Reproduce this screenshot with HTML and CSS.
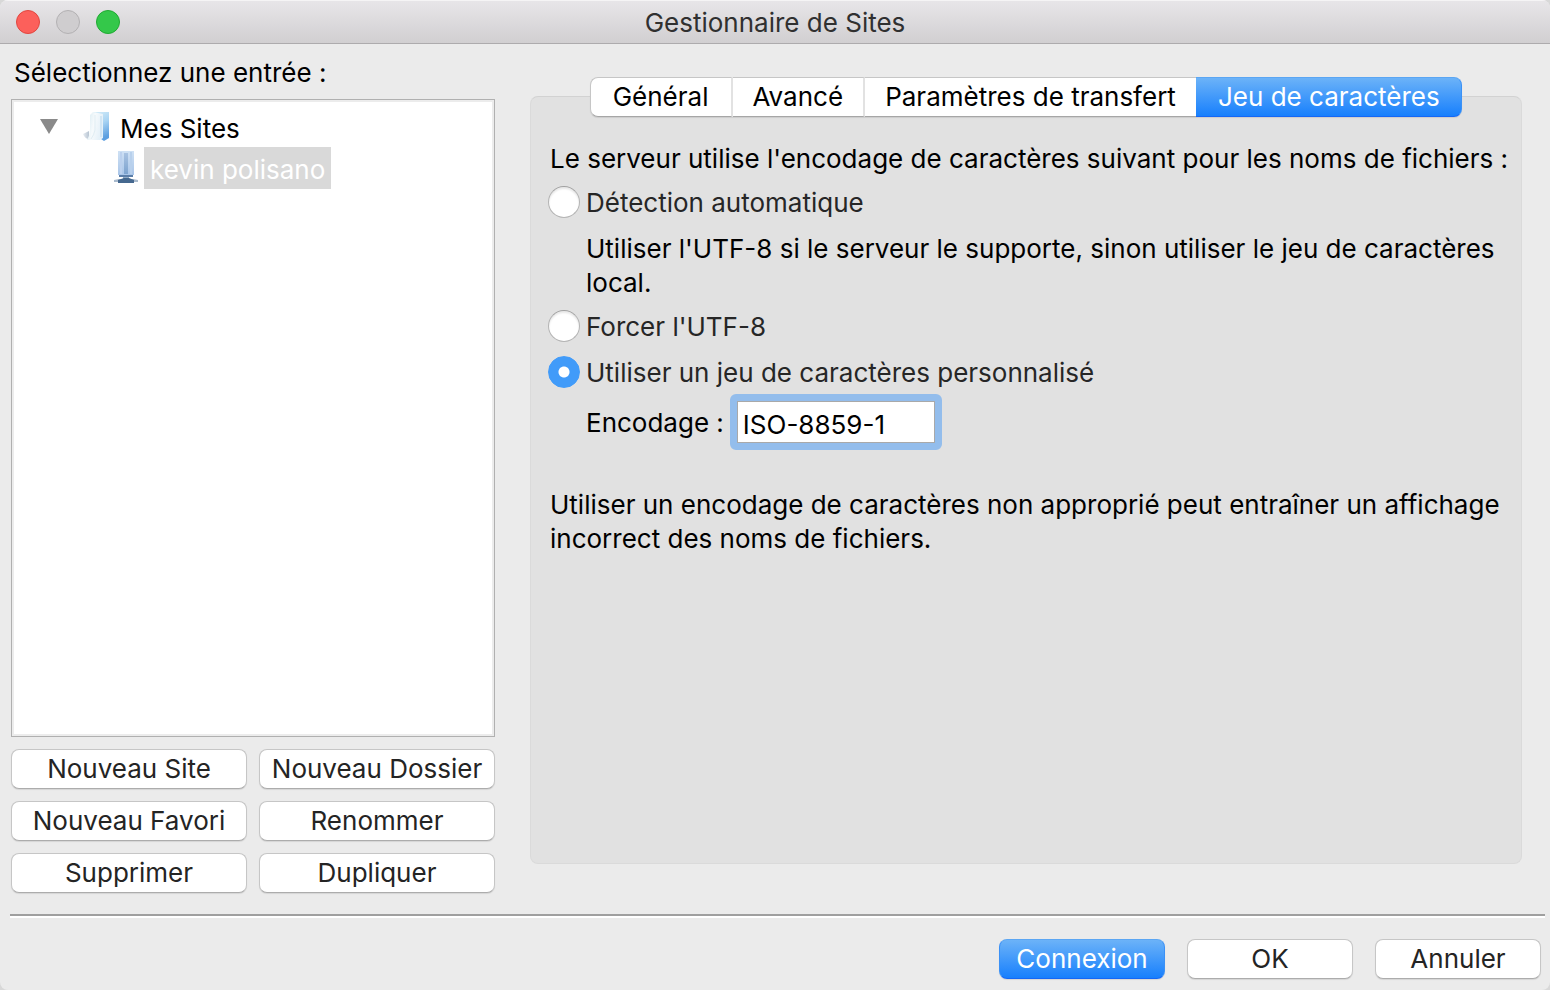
FILE: index.html
```html
<!DOCTYPE html>
<html lang="fr">
<head>
<meta charset="utf-8">
<title>Gestionnaire de Sites</title>
<link rel="stylesheet" href="styles.css">
</head>
<body>
<div class="window">
  <header class="titlebar">
    <div class="lights">
      <button class="light close" type="button" aria-label="Fermer"></button>
      <button class="light minimize" type="button" aria-label="Réduire" disabled></button>
      <button class="light expand" type="button" aria-label="Agrandir"></button>
    </div>
    <h1 class="title">Gestionnaire de Sites</h1>
  </header>

  <main class="content">
    <section class="sites">
      <h2 class="sites-label" id="sites-label">Sélectionnez une entrée :</h2>
      <ul class="tree" role="tree" aria-labelledby="sites-label">
        <li role="treeitem" aria-expanded="true" aria-selected="false">
          <div class="node">
            <svg class="arrow" width="18" height="15" viewBox="0 0 18 15"><path d="M0 0H18L9 15Z" fill="#8a8a8a"/></svg>
            <svg class="folder" width="32" height="32" viewBox="0 0 32 32">
              <defs>
                <linearGradient id="back" x1="0" y1="0" x2="0.3" y2="1"><stop offset="0" stop-color="#d6edf8"/><stop offset="0.5" stop-color="#a9d4f3"/><stop offset="1" stop-color="#5c9fe0"/></linearGradient>
                <linearGradient id="front" x1="0" y1="0" x2="1" y2="0.3"><stop offset="0" stop-color="#d5e9f1"/><stop offset="0.5" stop-color="#f6fafc"/><stop offset="1" stop-color="#e4f0f8"/></linearGradient>
                <linearGradient id="shade" x1="0" y1="0" x2="1" y2="0"><stop offset="0" stop-color="#e8edf2"/><stop offset="1" stop-color="#b7c4d2"/></linearGradient>
              </defs>
              <path d="M2 24L8 21V29Q4 29 2 24Z" fill="url(#shade)"/>
              <path d="M12 2H28V28L23 31L20 29Z" fill="url(#back)"/>
              <path d="M9 5L12 2L22 4V28L19 30H6Q9 25 9 18Z" fill="url(#front)"/>
              <path d="M14 5V20Q13 25 10 29" fill="none" stroke="#e0edf3"/>
              <path d="M20 6V27" stroke="#d2e6f4" stroke-width="2"/>
            </svg>
            <span class="name">Mes Sites</span>
          </div>
          <ul class="branch" role="group">
            <li class="node" role="treeitem" aria-selected="true">
              <svg class="server" width="28" height="36" viewBox="0 0 28 36">
                <defs>
                  <linearGradient id="case" x1="0" y1="0" x2="0" y2="1"><stop offset="0" stop-color="#cfe1f4"/><stop offset="1" stop-color="#a9c5e8"/></linearGradient>
                  <linearGradient id="slot" x1="0" y1="0" x2="0" y2="1"><stop offset="0" stop-color="#a9c3e2"/><stop offset="1" stop-color="#7da3cf"/></linearGradient>
                </defs>
                <path d="M6 2H22V26H6Z" fill="url(#case)"/>
                <path d="M8 3H10V25H8Z" fill="#bcd1ee"/>
                <path d="M12 4H16V25H12Z" fill="url(#slot)"/>
                <path d="M18 3H20V25H18Z" fill="#b8d0ec"/>
                <path d="M7 26H21V28H7Z" fill="#5b7ea9"/>
                <path d="M11 28H17V30H11Z" fill="#8fa9c5"/>
                <path d="M2 31L7 30H21L26 31V33H2Z" fill="#a9bacd"/>
                <path d="M6 31L12 29H17L22 31V34H6Z" fill="#45688f"/>
              </svg>
              <span class="name selected">kevin polisano</span>
            </li>
          </ul>
        </li>
      </ul>
      <div class="actions">
        <button class="button" type="button">Nouveau Site</button>
        <button class="button" type="button">Nouveau Dossier</button>
        <button class="button" type="button">Nouveau Favori</button>
        <button class="button" type="button">Renommer</button>
        <button class="button" type="button">Supprimer</button>
        <button class="button" type="button">Dupliquer</button>
      </div>
    </section>

    <section class="settings">
      <div class="tabs" role="tablist">
        <button class="tab" type="button" role="tab" aria-selected="false">Général</button>
        <button class="tab" type="button" role="tab" aria-selected="false">Avancé</button>
        <button class="tab" type="button" role="tab" aria-selected="false">Paramètres de transfert</button>
        <button class="tab active" type="button" role="tab" aria-selected="true">Jeu de caractères</button>
      </div>
      <form class="panel" role="tabpanel">
        <p class="intro">Le serveur utilise l'encodage de caractères suivant pour les noms de fichiers :</p>
        <div class="option">
          <input class="radio" type="radio" name="charset" id="auto">
          <label for="auto">Détection automatique</label>
        </div>
        <p class="hint">Utiliser l'UTF-8 si le serveur le supporte, sinon utiliser le jeu de caractères local.</p>
        <div class="option">
          <input class="radio" type="radio" name="charset" id="utf8">
          <label for="utf8">Forcer l'UTF-8</label>
        </div>
        <div class="option custom">
          <input class="radio" type="radio" name="charset" id="custom" checked>
          <label for="custom">Utiliser un jeu de caractères personnalisé</label>
        </div>
        <div class="encoding">
          <label for="encoding">Encodage :</label>
          <input class="field" type="text" id="encoding" value="ISO-8859-1">
        </div>
        <p class="warning">Utiliser un encodage de caractères non approprié peut entraîner un affichage incorrect des noms de fichiers.</p>
      </form>
    </section>
  </main>

  <footer class="footer">
    <button class="button primary" type="button">Connexion</button>
    <button class="button" type="button">OK</button>
    <button class="button" type="button">Annuler</button>
  </footer>
</div>
</body>
</html>
```

FILE: styles.css
```css
* {
  box-sizing: border-box;
}

body {
  margin: 0;
  background: #d8d8d8;
  color: #000;
  font: 26px/34px Inter, "Liberation Sans", sans-serif;
}

h1, h2, p, ul {
  margin: 0;
  padding: 0;
  font: inherit;
  list-style: none;
}

button, input {
  font: inherit;
}

.window {
  display: flex;
  flex-direction: column;
  min-height: 100vh;
  background: #ebebeb;
  border-radius: 8px;
  overflow: hidden;
}

.titlebar {
  display: grid;
  grid-template-columns: 1fr auto 1fr;
  align-items: center;
  height: 44px;
  padding: 0 16px;
  background: linear-gradient(#e8e6e9, #d1cfd1);
  border-bottom: 1px solid #adabad;
  box-shadow: inset 0 1px #f5f4f5;
}

.lights {
  display: flex;
  gap: 16px;
}

.light {
  width: 24px;
  height: 24px;
  padding: 0;
  border: 1px solid;
  border-radius: 50%;
}

.close {
  background: #fc605b;
  border-color: #e2463f;
}

.minimize {
  background: #cfcdcf;
  border-color: #b3b1b3;
}

.expand {
  background: #34c84a;
  border-color: #20aa32;
}

.title {
  padding-top: 2px;
  color: #303030;
}

.content {
  flex: 1;
  display: grid;
  grid-template-columns: 484fr 992fr;
  gap: 35px;
  padding: 0 28px 21px 11px;
}

.sites {
  display: flex;
  flex-direction: column;
}

.sites-label {
  padding: 12px 3px 9px;
}

.tree {
  flex: 1;
  padding: 8px;
  background: #fff;
  border: 1px solid #b0b0b0;
  box-shadow: inset 0 0 0 2px #ececec;
}

.node {
  display: flex;
  align-items: center;
  height: 40px;
}

.arrow {
  margin: 0 23px 4px 20px;
}

.folder {
  margin-bottom: 4px;
}

.branch {
  padding-left: 92px;
}

.server {
  margin-bottom: 2px;
}

.name {
  padding: 6px 6px 4px;
}

.folder + .name {
  padding-left: 7px;
}

.selected {
  padding-bottom: 2px;
  margin-left: 4px;
  background: #d9d9d9;
  color: #fff;
}

.actions {
  display: grid;
  grid-template-columns: 1fr 1fr;
  gap: 12px;
  margin-top: 12px;
}

.button {
  height: 40px;
  padding: 0 8px;
  background: #fff;
  border: 1px solid #c6c6c6;
  border-bottom-color: #acacac;
  border-radius: 8px;
  box-shadow: 0 1px 1px #00000018;
  color: #242424;
  line-height: 36px;
  white-space: nowrap;
}

.settings {
  display: flex;
  flex-direction: column;
  align-items: center;
  padding: 33px 0 29px;
}

.tabs {
  display: grid;
  grid-template-columns: 143fr 132fr 331fr 266fr;
  width: 88%;
  height: 40px;
  z-index: 1;
  border-radius: 8px;
  box-shadow: 0 1px 1px #00000018;
}

.tab {
  padding: 0;
  background: #fff;
  border: 1px solid #c6c6c6;
  border-bottom-color: #a6a6a6;
  border-left: 0;
  border-right: 2px solid #e2e2e2;
  color: #000;
  line-height: 36px;
  white-space: nowrap;
}

.tab:first-child {
  border-left: 1px solid #c6c6c6;
  border-radius: 8px 0 0 8px;
}

.tab:nth-child(3) {
  border-right: 0;
}

.tab.active,
.primary {
  background: linear-gradient(#6eb4f8, #157efd);
  border: 1px solid #3b91f6;
  border-top-color: #5ba6f3;
  border-bottom-color: #1567f5;
  background-origin: border-box;
  color: #fff;
}

.tab.active {
  border-left: 0;
  border-radius: 0 8px 8px 0;
}

.panel {
  flex: 1;
  align-self: stretch;
  margin-top: -21px;
  padding: 45px 8px 0 18px;
  background: #e1e1e1;
  border: 1px solid #dadada;
  border-top-color: #d2d2d2;
  border-radius: 8px;
}

.intro,
.warning {
  padding-left: 1px;
}

.option {
  display: flex;
  align-items: center;
  gap: 6px;
  height: 34px;
  margin-top: 9px;
  color: #262626;
}

.option label,
.encoding label {
  padding-top: 2px;
}

.custom {
  margin-top: 12px;
}

.radio {
  appearance: none;
  flex: none;
  width: 32px;
  height: 32px;
  margin: 0 0 0 -1px;
  background: #fff;
  border: 1px solid #b4b4b4;
  border-top-color: #a0a0a0;
  border-radius: 50%;
  box-shadow: inset 0 2px 2px #00000018;
}

.radio:checked {
  background: radial-gradient(circle, #fff 5px, #419bf9 6px);
  border-color: #419bf9;
  box-shadow: none;
}

.hint {
  margin-top: 13px;
  padding-left: 37px;
}

.encoding {
  display: flex;
  align-items: center;
  gap: 6px;
  margin-top: 5px;
  padding-left: 37px;
}

.field {
  width: 212px;
  height: 56px;
  padding: 4px 6px 0;
  background: #fff;
  background-clip: padding-box;
  border: 7px solid #93bdec;
  border-radius: 6px;
  box-shadow: inset 0 0 0 1px #a9a9a9;
  color: #000;
  outline: none;
}

.warning {
  margin-top: 38px;
}

.footer {
  display: flex;
  justify-content: flex-end;
  gap: 22px;
  margin: 0 5px 0 10px;
  padding: 23px 4px 11px;
  border-top: 2px solid #9f9f9f;
  box-shadow: inset 0 2px #fff;
}

.footer .button {
  width: 166px;
}
```
